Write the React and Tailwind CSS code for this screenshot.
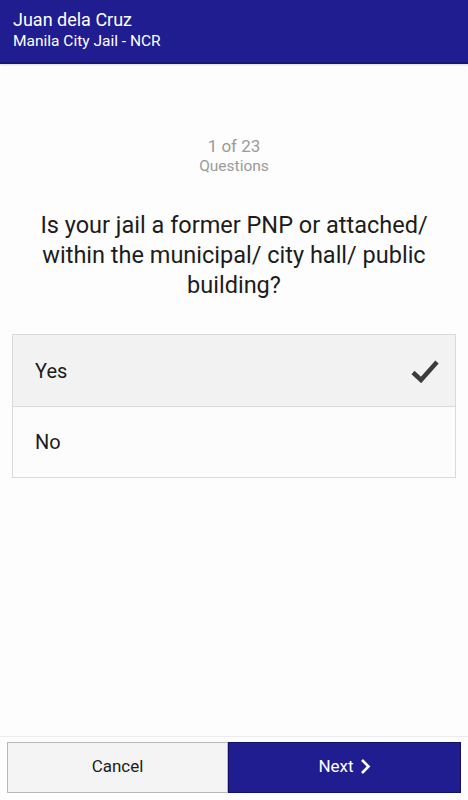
import React from "react";

export default function App() {
  return (
    <div
      className="flex h-[800px] w-[468px] flex-col bg-[#fdfdfd]"
      style={{ fontFamily: "Roboto, 'Liberation Sans', sans-serif" }}
    >
      <header className="flex h-[64px] shrink-0 flex-col justify-center border-b-2 border-[#15157a] bg-[#1f1d8f] px-[13px] pb-[2px] text-white shadow-[0_1px_2px_rgba(0,0,0,0.15)]">
        <div className="text-[18px] leading-[22px]">Juan dela Cruz</div>
        <div className="text-[15.5px] leading-[20px]">Manila City Jail - NCR</div>
      </header>

      <main className="flex-1">
        <div className="pt-[72px] text-center text-[#9a9a9a]">
          <div className="text-[17px] leading-[20px]">1 of 23</div>
          <div className="text-[15.5px] leading-[20px]">Questions</div>
        </div>
        <h1 className="mx-auto mt-[34px] w-[440px] text-center text-[23.5px] leading-[30px] text-[#1c1c1c]">
          Is your jail a former PNP or attached/ within the municipal/ city hall/ public building?
        </h1>
        <div className="mx-[12px] mt-[34px] border border-[#dadada]">
          <div className="flex h-[71px] items-center justify-between bg-[#f2f2f2] pl-[22px] pr-[16px]">
            <span className="text-[20px] text-[#1c1c1c]">Yes</span>
            <svg width="28" height="24" viewBox="0 0 28 24">
              <path
                d="M2 13.5 L10 21 L26 3"
                fill="none"
                stroke="#3c3c3c"
                strokeWidth="4.5"
                strokeLinejoin="miter"
              />
            </svg>
          </div>
          <div className="flex h-[71px] items-center border-t border-[#dadada] bg-[#fcfcfc] pl-[22px]">
            <span className="text-[20px] text-[#1c1c1c]">No</span>
          </div>
        </div>
      </main>

      <footer className="flex shrink-0 border-t border-[#ececec] px-[7px] pb-[7px] pt-[5px]">
        <button className="flex h-[51px] w-[221px] items-center justify-center border border-[#b8b8b8] bg-[#f4f4f4] pb-[2px] text-[17px] text-[#1c1c1c]">
          Cancel
        </button>
        <button className="flex h-[51px] flex-1 items-center justify-center gap-[6px] border border-[#111168] bg-[#1f1d8f] pb-[2px] text-[17px] text-white">
          <span>Next</span>
          <svg width="11" height="17" viewBox="0 0 11 17">
            <path d="M2 2 L8.5 8.5 L2 15" fill="none" stroke="white" strokeWidth="2.6" />
          </svg>
        </button>
      </footer>
    </div>
  );
}
